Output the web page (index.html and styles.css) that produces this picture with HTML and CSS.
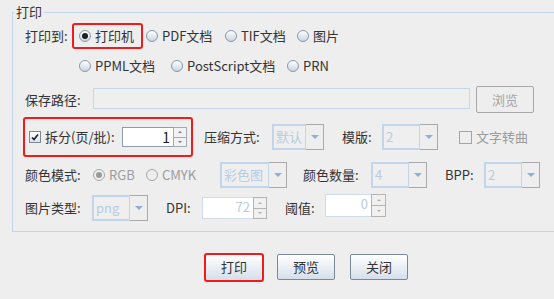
FILE: index.html
```html
<!DOCTYPE html>
<html lang="zh">
<head>
<meta charset="UTF-8">
<title>打印</title>
<link rel="stylesheet" href="styles.css">
</head>
<body>

<!-- Druckoptionen -->
<fieldset class="group">
  <legend>打印</legend>

  <div class="row row-target">
    <span class="label w47">打印到:</span>
    <div class="mark mark-radio">
      <span class="radio"><span class="dot on"></span>打印机</span>
    </div>
    <span class="radio w79 ml3"><span class="dot"></span>PDF文档</span>
    <span class="radio w72"><span class="dot"></span>TIF文档</span>
    <span class="radio"><span class="dot"></span>图片</span>
  </div>

  <div class="row row-target2">
    <span class="radio w92"><span class="dot"></span>PPML文档</span>
    <span class="radio w116"><span class="dot"></span>PostScript文档</span>
    <span class="radio"><span class="dot"></span>PRN</span>
  </div>

  <div class="row row-path">
    <span class="label w68">保存路径:</span>
    <span class="path-field"></span>
    <span class="btn btn-off">浏览</span>
  </div>

  <div class="row row-split">
    <div class="mark mark-split">
      <span class="check on">
        <svg width="10" height="10" viewBox="0 0 10 10"><path d="M2 5.5 L4 7.5 L8 2.5" fill="none" stroke="#1e1e1e" stroke-width="1.6"/></svg>
      </span>
      <span class="label w73">拆分(页/批):</span>
      <span class="spin">
        <span class="spin-field w51">1</span>
        <span class="spin-btns"><span class="up"></span><span class="down"></span></span>
      </span>
    </div>
    <span class="label w68 ml11">压缩方式:</span>
    <span class="combo w52"><span class="combo-text">默认</span><span class="combo-arrow"></span></span>
    <span class="label w40 ml18">模版:</span>
    <span class="combo w56"><span class="combo-text">2</span><span class="combo-arrow"></span></span>
    <span class="check off ml21"></span>
    <span class="label off-text ml4">文字转曲</span>
  </div>

  <div class="row row-color">
    <span class="label w68">颜色模式:</span>
    <span class="radio off-text w53"><span class="dot dot-off on"></span>RGB</span>
    <span class="radio off-text w74"><span class="dot dot-off"></span>CMYK</span>
    <span class="combo w67"><span class="combo-text">彩色图</span><span class="combo-arrow"></span></span>
    <span class="label w68 ml16">颜色数量:</span>
    <span class="combo w56"><span class="combo-text">4</span><span class="combo-arrow"></span></span>
    <span class="label w39 ml18">BPP:</span>
    <span class="combo w56"><span class="combo-text">2</span><span class="combo-arrow"></span></span>
  </div>

  <div class="row row-image">
    <span class="label w67">图片类型:</span>
    <span class="combo w56"><span class="combo-text">png</span><span class="combo-arrow"></span></span>
    <span class="label w36 ml18">DPI:</span>
    <span class="spin spin-off h22">
      <span class="spin-field w51">72</span>
      <span class="spin-btns"><span class="up"></span><span class="down"></span></span>
    </span>
    <span class="label w40 ml18">阈值:</span>
    <span class="spin spin-off h23 lift">
      <span class="spin-field w46">0</span>
      <span class="spin-btns w15"><span class="up"></span><span class="down"></span></span>
    </span>
  </div>
</fieldset>

<!-- Aktionen -->
<div class="actions">
  <span class="btn btn-main">打印</span>
  <span class="btn">预览</span>
  <span class="btn">关闭</span>
</div>

</body>
</html>
```

FILE: styles.css
```css
/* Grundlayout */
body {
  margin: 0;
  background-color: #eeeeee;
  color: #333;
  font-family: "Noto Sans CJK SC", "Noto Sans", sans-serif;
  font-size: 13px;
  line-height: 16px;
  overflow: hidden;
}
.group {
  margin: 4px -20px 0 12px;
  padding: 0 0 10px 1px;
  border: 1px solid #c3d5e8;
  min-width: 0;
}
.group legend {
  padding: 0 2px;
  color: #333;
}
.row {
  display: flex;
  align-items: center;
  padding-left: 11px;
  white-space: nowrap;
}
.row-target { margin-top: 1px; height: 30px; }
.row-target2 { height: 30px; padding-left: 65px; }
.row-path { margin-top: 5px; height: 27px; }
.row-split { margin-top: 4px; height: 40px; }
.row-color { margin-top: 5px; height: 26px; }
.row-image { margin-top: 7px; height: 26px; }

/* Breiten und Abstände */
.w36 { width: 36px; }
.w39 { width: 39px; }
.w40 { width: 40px; }
.w46 { width: 46px; }
.w47 { width: 47px; }
.w51 { width: 51px; }
.w52 { width: 52px; }
.w53 { width: 53px; }
.w56 { width: 56px; }
.w67 { width: 67px; }
.w68 { width: 68px; }
.w72 { width: 72px; }
.w73 { width: 73px; }
.w74 { width: 74px; }
.w79 { width: 79px; }
.w92 { width: 92px; }
.w116 { width: 116px; }
.ml3 { margin-left: 3px; }
.ml4 { margin-left: 4px; }
.ml11 { margin-left: 11px; }
.ml16 { margin-left: 16px; }
.ml18 { margin-left: 18px; }
.ml21 { margin-left: 21px; }
.label { flex: none; }
.off-text { color: #9c9c9c; }

/* rote Markierungen */
.mark {
  display: flex;
  align-items: center;
  border: 2px solid #f21b1b;
  border-radius: 3px;
  box-sizing: border-box;
}
.mark-radio {
  height: 26px;
  width: 71px;
  padding-left: 5px;
}
.mark-split {
  height: 40px;
  width: 170px;
  margin-left: -2px;
  padding-left: 4px;
}

/* Radio-Buttons */
.radio {
  display: flex;
  align-items: center;
  flex: none;
}
.dot {
  width: 12px;
  height: 12px;
  box-sizing: border-box;
  border-radius: 50%;
  border: 1px solid #8797a9;
  background: linear-gradient(#ffffff, #c9d5e2);
  margin-right: 4px;
  display: flex;
  align-items: center;
  justify-content: center;
}
.dot.on::after {
  content: "";
  width: 6px;
  height: 6px;
  border-radius: 50%;
  background-color: #1f1f1f;
}
.dot-off {
  border-color: #a6a6a6;
  background: #eeeeee;
}
.dot-off.on::after {
  background-color: #9a9a9a;
}

/* Checkboxen */
.check {
  width: 12px;
  height: 12px;
  box-sizing: border-box;
  border: 1px solid #7d8894;
  display: flex;
  align-items: center;
  justify-content: center;
  flex: none;
}
.check.on {
  background: linear-gradient(#ffffff, #dbe3ec);
  margin-right: 4px;
}
.check.off {
  width: 13px;
  height: 13px;
  border-color: #a4a4a4;
}

/* Eingabefelder */
.path-field {
  width: 377px;
  height: 21px;
  box-sizing: border-box;
  border: 1px solid #c6d7e9;
  background-color: #efefef;
  margin-bottom: 2px;
}
.spin {
  display: flex;
  height: 20px;
  margin-left: 4px;
  flex: none;
}
.spin-field {
  box-sizing: border-box;
  border: 1px solid #8e9cab;
  border-right: none;
  background-color: #fff;
  text-align: right;
  padding-right: 3px;
  font-size: 14px;
  line-height: 18px;
  color: #1a1a1a;
}
.spin-btns {
  width: 14px;
  display: flex;
  flex-direction: column;
}
.spin-btns span {
  flex: 1;
  border: 1px solid #a3acb6;
  background-color: #f2f2f2;
  display: flex;
  align-items: center;
  justify-content: center;
}
.spin-btns .up { border-bottom: none; }
.spin-btns .up::after {
  content: "";
  border: 2px solid transparent;
  border-bottom-color: #6f7a86;
  border-top: none;
}
.spin-btns .down::after {
  content: "";
  border: 2px solid transparent;
  border-top-color: #6f7a86;
  border-bottom: none;
}
.spin-off { margin-left: 0; }
.spin-off .spin-field {
  border-color: #cfdcea;
  color: #b9cde2;
  font-size: 13px;
}
.spin-off .spin-btns span {
  border-color: #b4b4b4;
  background-color: #f0f0f0;
}
.spin-off .spin-btns .up::after { border-bottom-color: #b0b0b0; }
.spin-off .spin-btns .down::after { border-top-color: #b0b0b0; }
.h22 { height: 22px; }
.h23 { height: 23px; }
.lift { margin-bottom: 5px; }
.w15 { width: 15px; }

/* Auswahllisten */
.combo {
  display: flex;
  height: 26px;
  flex: none;
}
.combo-text {
  flex: 1;
  box-sizing: border-box;
  border: 2px solid #c2d5e9;
  border-right-width: 1px;
  background-color: #efefef;
  color: #b8cce2;
  line-height: 22px;
  padding-left: 2px;
  overflow: hidden;
}
.combo-arrow {
  width: 18px;
  box-sizing: border-box;
  border: 1px solid #a9a9a9;
  border-left: none;
  display: flex;
  align-items: center;
  justify-content: center;
}
.combo-arrow::after {
  content: "";
  border: 4px solid transparent;
  border-top: 4px solid #8fb0d5;
  border-bottom: none;
}

/* Schaltflächen */
.btn {
  display: flex;
  align-items: center;
  justify-content: center;
  width: 58px;
  height: 26px;
  box-sizing: border-box;
  border: 1px solid #7c8895;
  border-radius: 2px;
  background: linear-gradient(#ffffff, #d5dfea);
  color: #333;
  flex: none;
}
.btn-off {
  margin-left: 6px;
  height: 27px;
  border-color: #a8a8a8;
  background: #eeeeee;
  color: #a4a4a4;
}
.btn-main {
  width: 60px;
  height: 29px;
  border: 2px solid #f21b1b;
  border-radius: 3px;
}
.actions {
  display: flex;
  align-items: center;
  height: 30px;
  margin-top: 20px;
  padding-left: 204px;
  gap: 13px;
}
.actions .btn + .btn + .btn { margin-left: 2px; }
```
